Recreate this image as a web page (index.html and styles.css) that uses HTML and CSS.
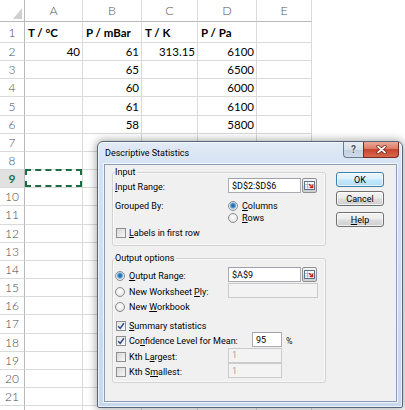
FILE: index.html
```html
<!DOCTYPE html>
<html>
<head>
<meta charset="utf-8">
<link rel="stylesheet" href="styles.css">
</head>
<body>
<div class="app">
  <div class="sheet">
    <div class="corner"><svg class="tri" width="9" height="11" viewBox="0 0 9 11"><polygon points="9,0 9,11 0,11" fill="#d0d0d0"/></svg></div>
    <div class="ch">A</div><div class="ch">B</div><div class="ch">C</div><div class="ch">D</div><div class="ch">E</div>

    <div class="rh">1</div><div class="c b">T / °C</div><div class="c b">P / mBar</div><div class="c b">T / K</div><div class="c b">P / Pa</div><div class="c"></div>
    <div class="rh">2</div><div class="c n">40</div><div class="c n">61</div><div class="c n">313.15</div><div class="c n">6100</div><div class="c"></div>
    <div class="rh">3</div><div class="c"></div><div class="c n">65</div><div class="c"></div><div class="c n">6500</div><div class="c"></div>
    <div class="rh">4</div><div class="c"></div><div class="c n">60</div><div class="c"></div><div class="c n">6000</div><div class="c"></div>
    <div class="rh">5</div><div class="c"></div><div class="c n">61</div><div class="c"></div><div class="c n">6100</div><div class="c"></div>
    <div class="rh">6</div><div class="c"></div><div class="c n">58</div><div class="c"></div><div class="c n">5800</div><div class="c"></div>
    <div class="rh">7</div><div class="c"></div><div class="c"></div><div class="c"></div><div class="c"></div><div class="c"></div>
    <div class="rh">8</div><div class="c"></div><div class="c"></div><div class="c"></div><div class="c"></div><div class="c"></div>
    <div class="rh sel">9</div><div class="c active"></div><div class="c"></div><div class="c"></div><div class="c"></div><div class="c"></div>
    <div class="rh">10</div><div class="c"></div><div class="c"></div><div class="c"></div><div class="c"></div><div class="c"></div>
    <div class="rh">11</div><div class="c"></div><div class="c"></div><div class="c"></div><div class="c"></div><div class="c"></div>
    <div class="rh">12</div><div class="c"></div><div class="c"></div><div class="c"></div><div class="c"></div><div class="c"></div>
    <div class="rh">13</div><div class="c"></div><div class="c"></div><div class="c"></div><div class="c"></div><div class="c"></div>
    <div class="rh">14</div><div class="c"></div><div class="c"></div><div class="c"></div><div class="c"></div><div class="c"></div>
    <div class="rh">15</div><div class="c"></div><div class="c"></div><div class="c"></div><div class="c"></div><div class="c"></div>
    <div class="rh">16</div><div class="c"></div><div class="c"></div><div class="c"></div><div class="c"></div><div class="c"></div>
    <div class="rh">17</div><div class="c"></div><div class="c"></div><div class="c"></div><div class="c"></div><div class="c"></div>
    <div class="rh">18</div><div class="c"></div><div class="c"></div><div class="c"></div><div class="c"></div><div class="c"></div>
    <div class="rh">19</div><div class="c"></div><div class="c"></div><div class="c"></div><div class="c"></div><div class="c"></div>
    <div class="rh">20</div><div class="c"></div><div class="c"></div><div class="c"></div><div class="c"></div><div class="c"></div>
    <div class="rh">21</div><div class="c"></div><div class="c"></div><div class="c"></div><div class="c"></div><div class="c"></div>
    <div class="rh"></div><div class="c"></div><div class="c"></div><div class="c"></div><div class="c"></div><div class="c"></div>
  </div>

  <div class="dialog">
    <div class="titlebar">
      <span class="title">Descriptive Statistics</span>
      <div class="caps">
        <span class="cap qbtn">?</span>
        <span class="cap xbtn"><svg width="11" height="9" viewBox="0 0 11 9"><path d="M2 1.5 L9 7.5 M9 1.5 L2 7.5" stroke="#6b1d12" stroke-width="3.2" stroke-linecap="round"/><path d="M2 1.5 L9 7.5 M9 1.5 L2 7.5" stroke="#fff" stroke-width="1.7" stroke-linecap="round"/></svg></span>
      </div>
    </div>
    <div class="client">
      <div class="groups">
        <fieldset class="grp grp-in">
          <legend>Input</legend>
          <div class="row h15">
            <span class="lbl tl"><u>I</u>nput Range:</span>
            <span class="tb w73">$D$2:$D$6</span>
            <span class="ref"><svg width="11" height="9" viewBox="0 0 11 9"><rect x=".5" y=".5" width="10" height="8" fill="#fff" stroke="#5d7190"/><path d="M1 3.5H10M1 6H10M3.5 1V8" stroke="#9fb2cc" stroke-width=".8"/><path d="M5 3.2 L8.3 6.3 M8.6 3.8 V6.6 H5.8" stroke="#d3261a" stroke-width="1.4" fill="none"/></svg></span>
          </div>
          <div class="row h12 mt7">
            <span class="lbl">Grouped By:</span>
            <span class="opt"><span class="radio on"></span><span><u>C</u>olumns</span></span>
          </div>
          <div class="row h12">
            <span class="lbl"></span>
            <span class="opt"><span class="radio"></span><span><u>R</u>ows</span></span>
          </div>
          <div class="row h12 mt3">
            <span class="opt"><span class="chk"></span><span><u>L</u>abels in first row</span></span>
          </div>
        </fieldset>

        <fieldset class="grp grp-out">
          <legend>Output options</legend>
          <div class="row h15 mt3">
            <span class="lbl opt tl"><span class="radio on"></span><span><u>O</u>utput Range:</span></span>
            <span class="tb w73">$A$9</span>
            <span class="ref"><svg width="11" height="9" viewBox="0 0 11 9"><rect x=".5" y=".5" width="10" height="8" fill="#fff" stroke="#5d7190"/><path d="M1 3.5H10M1 6H10M3.5 1V8" stroke="#9fb2cc" stroke-width=".8"/><path d="M5 3.2 L8.3 6.3 M8.6 3.8 V6.6 H5.8" stroke="#d3261a" stroke-width="1.4" fill="none"/></svg></span>
          </div>
          <div class="row h15 mt1">
            <span class="lbl opt tl"><span class="radio"></span><span>New Worksheet <u>P</u>ly:</span></span>
            <span class="tb dis w90"></span>
          </div>
          <div class="row h12 mt3">
            <span class="lbl opt"><span class="radio"></span><span>New <u>W</u>orkbook</span></span>
          </div>
          <div class="row h12 mt7">
            <span class="opt"><span class="chk on"><svg width="8" height="8" viewBox="0 0 8 8"><path d="M1.2 4.2 L3.2 6.4 L6.9 1.2" stroke="#2f4a8c" stroke-width="1.5" fill="none"/></svg></span><span><u>S</u>ummary statistics</span></span>
          </div>
          <div class="row h15">
            <span class="lbl wide opt tl"><span class="chk on"><svg width="8" height="8" viewBox="0 0 8 8"><path d="M1.2 4.2 L3.2 6.4 L6.9 1.2" stroke="#2f4a8c" stroke-width="1.5" fill="none"/></svg></span><span>Co<u>n</u>fidence Level for Mean:</span></span>
            <span class="tb w30">95</span>
            <span class="pct">%</span>
          </div>
          <div class="row h14 mt1">
            <span class="lbl opt tl"><span class="chk"></span><span>Kth L<u>a</u>rgest:</span></span>
            <span class="tb dis w54">1</span>
          </div>
          <div class="row h15 mt1">
            <span class="lbl opt tl"><span class="chk"></span><span>Kth S<u>m</u>allest:</span></span>
            <span class="tb dis w54">1</span>
          </div>
        </fieldset>
      </div>
      <div class="buttons">
        <span class="btn def">OK</span>
        <span class="btn cancel">Cancel</span>
        <span class="btn help"><span><u>H</u>elp</span></span>
      </div>
    </div>
  </div>
</div>
</body>
</html>
```

FILE: styles.css
```css
* { box-sizing: border-box; }
html, body { margin: 0; padding: 0; background: #fff; }
body { width: 405px; height: 410px; overflow: hidden; }
.app { position: relative; width: 405px; height: 410px; overflow: hidden; }

/* ---------- spreadsheet ---------- */
.sheet {
  display: grid;
  grid-template-columns: 25px 58px 59px 56px 59px 55px;
  grid-template-rows: 22px 21px repeat(21, 18.16px);
  width: 312px;
  font-family: Lato, "Liberation Sans", sans-serif;
  font-size: 11.5px;
  color: #000;
}
.sheet > div {
  border-right: 1px solid #dadada;
  border-bottom: 1px solid #dadada;
  display: flex;
  align-items: center;
  white-space: nowrap;
  overflow: hidden;
}
.corner { justify-content: flex-end; align-items: flex-end !important; padding: 0 2px 2px 0; border-right-color: #b9b9b9 !important; border-bottom-color: #b9b9b9 !important; }
.tri { display: block; }
.ch { justify-content: center; color: #555; font-size: 12.5px; font-weight: 300; border-bottom-color: #b9b9b9 !important; }
.rh { justify-content: center; color: #4a4a4a; font-size: 12px; font-weight: 300; border-right-color: #b9b9b9 !important; }
.rh.sel { background: #e1e1e1; color: #217346; font-weight: 700; }
.c { padding: 0 2px 0 3px; }
.b { font-weight: 700; }
.n { justify-content: flex-end; }
.active { position: relative; overflow: visible !important; }
.active::after {
  content: "";
  position: absolute;
  top: -1px; left: 0; right: 0; bottom: 0;
  border: 2px dashed #1d6b41;
}

/* ---------- dialog ---------- */
.dialog {
  position: absolute;
  left: 97px;
  top: 141px;
  width: 306px;
  height: 267px;
  border: 1px solid #56657a;
  border-radius: 6px 6px 2px 2px;
  background: linear-gradient(to bottom, #e2ebf6 0, #d4e2f3 24px, #c8d8ed 100%);
  box-shadow: 0 0 8px 1px rgba(0,0,0,.35), inset 0 0 0 1px rgba(255,255,255,.65);
  padding: 0 5px 5px 6px;
  display: flex;
  flex-direction: column;
  font-family: Roboto, "Liberation Sans", sans-serif;
  font-size: 9px;
  color: #000;
}
.titlebar {
  height: 22px;
  flex: none;
  display: flex;
  align-items: flex-start;
  justify-content: space-between;
  margin: 0 -5px 0 -6px;
  padding: 0 3px 0 7px;
}
.title { align-self: center; font-size: 9px; color: #000; }
.caps { display: flex; }
.cap {
  height: 16px;
  display: flex;
  align-items: center;
  justify-content: center;
  border: 1px solid #6a7b94;
  border-top: none;
}
.qbtn {
  width: 20px;
  border-right: none;
  border-radius: 0 0 0 4px;
  background: linear-gradient(to bottom, #e9eef5 0, #d6dfea 50%, #c3cfdd 51%, #cfdae8 100%);
  color: #4b5563;
  font-weight: 700;
  font-size: 10px;
  text-shadow: 0 0 2px #fff;
}
.xbtn {
  width: 36px;
  border-radius: 0 0 4px 0;
  border-color: #7a2a1f;
  background: linear-gradient(to bottom, #eda796 0, #dc7b66 45%, #c9452d 50%, #d4684c 100%);
}
.client {
  flex: 1;
  background: #f0f0f0;
  border: 1px solid #8c9cb3;
  box-shadow: 0 0 0 1px rgba(255,255,255,.7);
  display: flex;
  padding: 1px 0 0 7px;
}
.groups { width: 214px; flex: none; }
.grp {
  margin: 0;
  padding: 0 0 6px 2px;
  border: 1px solid #d3d3d3;
  border-radius: 3px;
  box-shadow: inset 0 0 0 1px rgba(255,255,255,.6);
  min-width: 0;
}
.grp-out { margin-top: 6px; padding-bottom: 4px; }
legend {
  padding: 0 2px 0 0;
  line-height: 12px;
  height: 12px;
  font-size: 9px;
}
.row { display: flex; align-items: center; white-space: nowrap; }
.h15 { height: 15px; }
.h14 { height: 14px; }
.h12 { height: 12px; }
.mt1 { margin-top: 1px; }
.mt3 { margin-top: 3px; }
.mt7 { margin-top: 7px; }
.lbl { width: 113px; flex: none; display: flex; align-items: center; }
.lbl.wide { width: 137px; }
.tl { padding-top: 3px; }
.opt { display: flex; align-items: center; gap: 4px; }
.radio {
  width: 10px; height: 10px; flex: none;
  border-radius: 50%;
  border: 1px solid #8d8d8d;
  background: radial-gradient(circle at 50% 40%, #ffffff 0, #e9e9e9 60%, #d2d2d2 100%);
}
.radio.on {
  background: radial-gradient(circle at 50% 45%, #1f5f96 0, #3b86c4 1.8px, #8cc2ea 3px, #e8e8e8 3.6px, #f7f7f7 100%);
}
.chk {
  width: 10px; height: 10px; flex: none;
  margin-left: 1px;
  margin-right: -1px;
  border: 1px solid #8e8f8f;
  background: linear-gradient(135deg, #d8d8d8 0, #f6f6f6 100%);
  display: flex; align-items: center; justify-content: center;
}
.chk.on { background: linear-gradient(135deg, #e4e4e4 0, #fbfbfb 100%); }
.chk svg { display: block; }
.tb {
  height: 15px; flex: none;
  border: 1px solid #abadb3;
  border-top-color: #9fa2aa;
  background: #fff;
  padding: 0 0 0 3px;
  display: flex; align-items: center;
  font-size: 9px;
}
.tb.dis { background: #f3f3f3; border-color: #cbcbcb; color: #a3a3a3; }
.w30 { width: 30px; }
.w54 { width: 54px; }
.w73 { width: 73px; }
.w90 { width: 90px; }
.ref {
  width: 15px; height: 15px; flex: none;
  margin-left: 1px;
  border: 1px solid #8e9094;
  border-radius: 2px;
  background: linear-gradient(to bottom, #f4f4f4 0, #e6e6e6 50%, #d7d7d7 51%, #cfcfcf 100%);
  display: flex; align-items: center; justify-content: center;
}
.ref svg { display: block; }
.pct { margin-left: 4px; padding-top: 2px; color: #222; }
.buttons {
  width: 48px; flex: none;
  margin-left: 10px;
  padding-top: 6px;
  display: flex;
  flex-direction: column;
}
.btn {
  height: 15px;
  border: 1px solid #707070;
  border-radius: 3px;
  background: linear-gradient(to bottom, #f4f4f4 0, #ebebeb 48%, #dddddd 52%, #cfcfcf 100%);
  box-shadow: inset 0 0 0 1px rgba(255,255,255,.7);
  display: flex; align-items: center; justify-content: center;
  font-size: 9px;
}
.btn.def {
  border-color: #3c7fb1;
  background: linear-gradient(to bottom, #ecf7fd 0, #dcf1fc 48%, #c4e8fc 52%, #b3def7 100%);
}
.cancel { margin-top: 4px; }
.help { margin-top: 6px; }
u { text-decoration: underline; text-underline-offset: 1px; }
```
